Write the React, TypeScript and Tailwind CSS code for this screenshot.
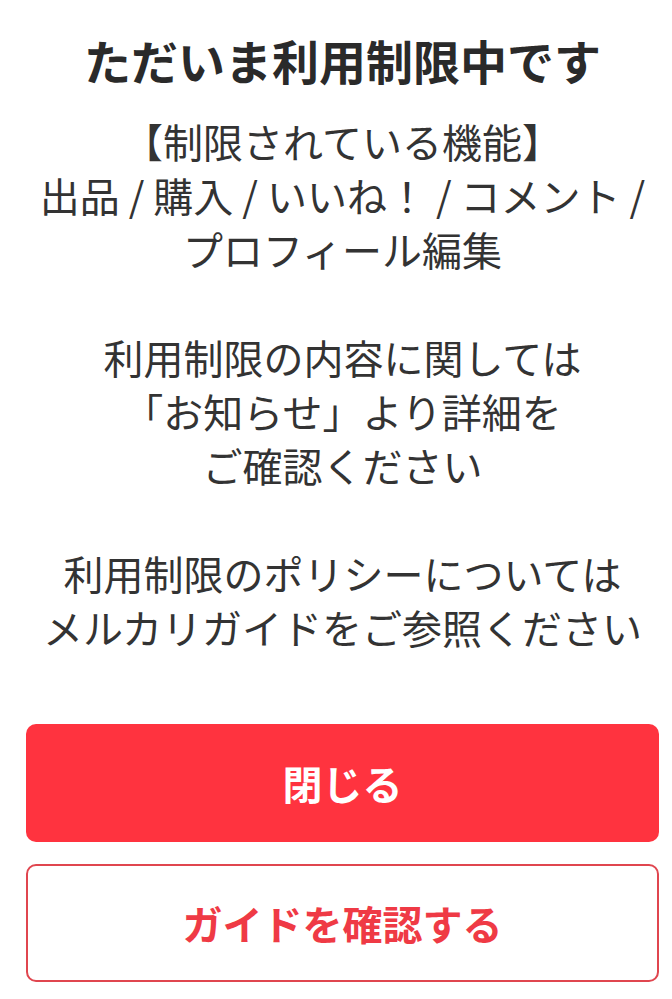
import React from "react";

const font = { fontFamily: '"Noto Sans CJK JP", "Noto Sans", sans-serif' };

const App = () => {
  return (
    <div className="min-h-screen bg-white" style={font}>
      <div className="pl-[26px] pr-[13px] pt-[26px] pb-[17px]">
        <h1 className="text-center text-[47px] leading-[68px] font-bold text-[#2a2a2a]">
          ただいま利用制限中です
        </h1>

        <div className="mt-[20px] text-center text-[40px] leading-[54px] text-[#333333] whitespace-nowrap">
          <p>【制限されている機能】</p>
          <p>出品 / 購入 / いいね！ / コメント /</p>
          <p>プロフィール編集</p>
          <p>&nbsp;</p>
          <p>利用制限の内容に関しては</p>
          <p>「お知らせ」より詳細を</p>
          <p>ご確認ください</p>
          <p>&nbsp;</p>
          <p>利用制限のポリシーについては</p>
          <p>メルカリガイドをご参照ください</p>
        </div>

        <div className="mt-[70px] flex flex-col gap-[22px]">
          <button
            type="button"
            className="h-[118px] w-full rounded-[10px] bg-[#ff333f] text-[40px] font-bold text-white"
          >
            閉じる
          </button>
          <button
            type="button"
            className="h-[118px] w-full rounded-[10px] border-2 border-[#e0464f] bg-white text-[40px] font-bold text-[#ef3a45]"
          >
            ガイドを確認する
          </button>
        </div>
      </div>
    </div>
  );
};

export default App;
